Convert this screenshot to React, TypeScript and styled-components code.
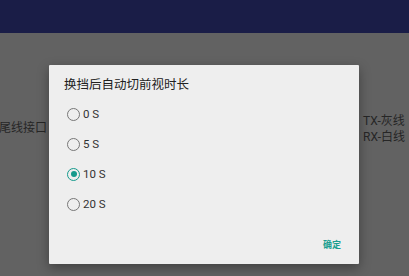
import React, { useState } from 'react';
import styled, { createGlobalStyle } from 'styled-components';

const GlobalStyle = createGlobalStyle`
  html, body {
    margin: 0;
    padding: 0;
    width: 409px;
    height: 276px;
    overflow: hidden;
    font-family: Roboto, "Noto Sans CJK SC", sans-serif;
  }
`;

const Screen = styled.div`
  position: relative;
  width: 409px;
  height: 276px;
  display: flex;
  flex-direction: column;
  background: #626262;
`;

const TopBar = styled.div`
  height: 33px;
  background: #1a1d47;
  flex-shrink: 0;
`;

const Page = styled.div`
  flex: 1;
  display: flex;
  justify-content: space-between;
  align-items: flex-start;
  padding-top: 80px;
  color: #262626;
  font-size: 12px;
  line-height: 16px;
`;

const LeftLabel = styled.div`
  margin-top: 7px;
  margin-left: -1px;
`;

const RightLabels = styled.div`
  margin-right: 4px;
  display: flex;
  flex-direction: column;
`;

const Overlay = styled.div`
  position: absolute;
  left: 49px;
  top: 65px;
`;

const Dialog = styled.div`
  width: 310px;
  height: 199px;
  background: #eeeeee;
  border-radius: 1px;
  box-shadow: 0 4px 12px rgba(0, 0, 0, 0.35);
  display: flex;
  flex-direction: column;
`;

const Title = styled.h2`
  margin: 0;
  padding: 12px 15px 0;
  font-size: 12.5px;
  line-height: 16px;
  font-weight: 400;
  color: #212121;
`;

const List = styled.div`
  padding-top: 6px;
  display: flex;
  flex-direction: column;
`;

const Row = styled.label`
  height: 30px;
  display: flex;
  align-items: center;
  gap: 3px;
  padding-left: 18px;
  font-size: 11.5px;
  color: #333333;
  cursor: pointer;
`;

const Circle = styled.span<{ $checked: boolean }>`
  width: 13px;
  height: 13px;
  box-sizing: border-box;
  border-radius: 50%;
  border: 1.5px solid ${(p) => (p.$checked ? '#159a8c' : '#777777')};
  display: flex;
  align-items: center;
  justify-content: center;

  &::after {
    content: '';
    width: 6px;
    height: 6px;
    border-radius: 50%;
    background: ${(p) => (p.$checked ? '#159a8c' : 'transparent')};
  }
`;

const Footer = styled.div`
  margin-top: auto;
  display: flex;
  justify-content: flex-end;
  padding: 0 16px 10px 0;
`;

const OkButton = styled.button`
  background: none;
  border: none;
  padding: 0 2px;
  height: 20px;
  font-family: Roboto, "Noto Sans CJK SC", sans-serif;
  font-size: 9px;
  font-weight: 700;
  color: #1a9e90;
  cursor: pointer;
`;

const options = ['0 S', '5 S', '10 S', '20 S'];

export default function App() {
  const [selected, setSelected] = useState(2);

  return (
    <>
      <GlobalStyle />
      <Screen>
        <TopBar />
        <Page>
          <LeftLabel>尾线接口</LeftLabel>
          <RightLabels>
            <span>TX-灰线</span>
            <span>RX-白线</span>
          </RightLabels>
        </Page>
        <Overlay>
          <Dialog>
            <Title>换挡后自动切前视时长</Title>
            <List>
              {options.map((o, i) => (
                <Row key={o} onClick={() => setSelected(i)}>
                  <Circle $checked={selected === i} />
                  {o}
                </Row>
              ))}
            </List>
            <Footer>
              <OkButton>确定</OkButton>
            </Footer>
          </Dialog>
        </Overlay>
      </Screen>
    </>
  );
}
